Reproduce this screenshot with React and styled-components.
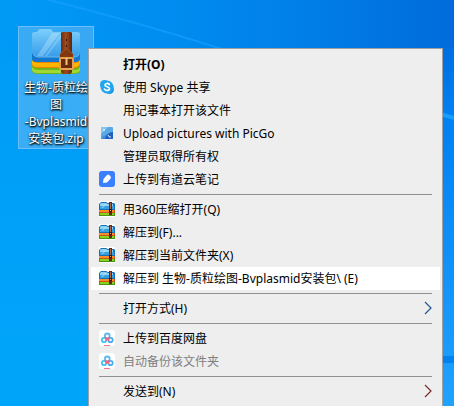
import React from "react";
import styled, { createGlobalStyle, css } from "styled-components";

const GlobalStyle = createGlobalStyle`
  * { box-sizing: border-box; }
  body { margin: 0; }
  button { font: inherit; color: inherit; border: 0; background: none; padding: 0; margin: 0; }
`;

const Desktop = styled.main`
  position: relative;
  height: 100vh;
  overflow: hidden;
  padding: 26px 18px;
  font-family: "Noto Sans", "Noto Sans CJK SC", sans-serif;
  font-size: 12px;
  background: linear-gradient(to bottom, #009af5, #00a6fa);
`;

const Wallpaper = styled.svg`
  position: absolute;
  inset: 0;
  width: 100%;
  height: 100%;
`;

const FileShortcut = styled.button`
  && {
    position: relative;
    display: flex;
    flex-direction: column;
    align-items: center;
    width: 76px;
    padding: 2px 0 1px;
    border: 1px solid #6cbef8;
    background: rgba(120, 190, 245, 0.48);
    color: #fff;
    line-height: 17px;
    text-shadow: 0 1px 2px #000, 1px 1px 2px #000;
  }
`;

const FileName = styled.span`
  width: 72px;
  margin-top: 4px;
  white-space: nowrap;
  text-align: center;
`;

const ContextMenu = styled.ul`
  position: absolute;
  top: 48px;
  left: 88px;
  right: 11px;
  min-height: 100%;
  margin: 0;
  padding: 4px 2px;
  list-style: none;
  border: 1px solid #a0a0a0;
  background: #eeeeee;
  color: #000;
`;

const Item = styled.li`
  display: block;
`;

const MenuButton = styled.button`
  && {
    display: grid;
    grid-template-columns: 16px 1fr 8px;
    column-gap: 8px;
    align-items: start;
    width: 100%;
    padding: 3px 8px;
    line-height: 17px;
    text-align: left;
    white-space: nowrap;
    font-weight: ${(p) => (p.$strong ? 700 : 400)};
    ${(p) => p.$active && css`background: #fff;`}
    &:disabled { color: #808080; }
  }
`;

const IconSlot = styled.span`
  display: flex;
  height: 16px;
`;

const Separator = styled.li`
  height: 1px;
  margin: 3px 8px;
  background: #919191;
`;

const ArchiveLarge = () => (
  <svg width="48" height="46" viewBox="0 0 48 46" aria-hidden="true">
    <defs>
      <linearGradient id="sky" x1="0" y1="0" x2="0" y2="1">
        <stop offset="0" stopColor="#7fd0fb" />
        <stop offset="0.3" stopColor="#62bdf5" />
        <stop offset="1" stopColor="#2b93e6" />
      </linearGradient>
      <linearGradient id="belt" x1="0" y1="0" x2="1" y2="0">
        <stop offset="0" stopColor="#6b2c0e" />
        <stop offset="0.45" stopColor="#a04c1c" />
        <stop offset="1" stopColor="#5c240c" />
      </linearGradient>
    </defs>
    <path d="M0 34h48v7q0 4-5 4H5q-5 0-5-4z" fill="#6fb51c" />
    <path d="M0 38q2 3 6 3h37q4 0 5-3v3q-1 3-5 3H5q-4 0-5-3z" fill="#a0d834" />
    <path d="M0 27h48v8q-1 4-5 4H5q-5 0-5-4z" fill="#e98400" />
    <path d="M0 31q2 3 6 3h37q4 0 5-3v3q-1 4-5 4H5q-5 0-5-4z" fill="#ffb400" />
    <path d="M0 5q0-2 3-2h2q1-3 4-3h9q2 0 3 3h24q3 0 3 2v25q-1 3-5 3H5q-5 0-5-4z" fill="url(#sky)" />
    <path d="M20 4h8L11 27H5zM30 4h2L15 27h-2z" fill="#d9f3ff" opacity=".3" />
    <path d="M0 24q2 4 6 4h37q4 0 5-4v6q-1 3-5 3H5q-5 0-5-3z" fill="#1476cc" />
    <path d="M1 25q2 3 5 3h37q3 0 4-3" fill="none" stroke="#64b9f0" strokeWidth="1" />
    <path d="M29 4q0-1 2-1h7q2 0 2 1v38q0 3-3 3h-5q-3 0-3-3z" fill="url(#belt)" />
    <path d="M28 25l6-5h1l6 5v4H28z" fill="#82380f" />
    <path d="M28 25l6-5h1l6 5" fill="none" stroke="#a35520" />
    <rect x="28" y="29" width="13" height="11" rx="1" fill="#6b2c0e" stroke="#e6a34b" strokeWidth="2" />
    <path d="M34.5 29v7" stroke="#f4c47a" strokeWidth="2" />
    <path d="M34 11h1M34 17h1" stroke="#35100a" strokeWidth="2" />
  </svg>
);

const Archive = () => (
  <svg width="16" height="16" viewBox="0 0 16 16" aria-hidden="true">
    <path d="M0 0h16v16H0z" fill="#fff" />
    <path d="M0 11h16v4H0z" fill="#4d9211" />
    <path d="M1 12h14v2H1z" fill="#8ad41f" />
    <path d="M0 8h16v4H0z" fill="#cc5312" />
    <path d="M0 9h15v2H0z" fill="#f98f26" />
    <path d="M0 3l2-2h5l2 1h6l1 1v6H0z" fill="#176fb5" />
    <path d="M1 3l1-1h5l2 1h5v2H1z" fill="#8dd2f7" />
    <path d="M1 5h14v3H1z" fill="#359fe0" />
    <path d="M6 3h2L4 7H2z" fill="#b9e5fc" opacity=".5" />
    <path d="M10 1h3v13h-3z" fill="#642713" />
    <path d="M11 2h1v7h-1z" fill="#b36238" />
    <path d="M10 8h3v3h-3z" fill="#371511" />
    <path d="M11 9h1v1h-1z" fill="#e9aa62" />
  </svg>
);

const Skype = () => (
  <svg width="16" height="16" viewBox="0 0 16 16" aria-hidden="true">
    <circle cx="5.5" cy="5.5" r="4.5" fill="#24a5ec" />
    <circle cx="10.5" cy="10.5" r="4.5" fill="#159be5" />
    <circle cx="8" cy="8" r="6.5" fill="#22a5ec" />
    <path d="M10.3 5.5C9.5 4.1 6 4 6 6c0 2.1 4.5 1.3 4.5 3.7 0 2.2-4 2.3-5 .4" fill="none" stroke="#fff" strokeWidth="1.7" strokeLinecap="round" />
  </svg>
);

const PicGo = () => (
  <svg width="16" height="16" viewBox="0 0 16 16" aria-hidden="true">
    <rect x="2" y="2" width="12" height="12" rx="1" fill="#5aa9e4" />
    <path d="M2 9l7-7H3q-1 0-1 1z" fill="#86c8f1" />
    <path d="M14 2v5q-4 0-6 3-3 0-6 3l1 1h11z" fill="#3e8fdb" />
    <path d="M6 14q1-6 8-7v6q0 1-1 1z" fill="#1c5fc0" />
    <circle cx="5" cy="5" r="1" fill="#d8f2ff" />
    <path d="M9 10q1 3 3 2" fill="none" stroke="#e6f6ff" />
  </svg>
);

const Youdao = () => (
  <svg width="16" height="16" viewBox="0 0 16 16" aria-hidden="true">
    <rect width="16" height="16" rx="3" fill="#397fff" />
    <path d="M4 12l.5-4L8 4q1.3-1 2.5.3l1 1.2q1 1.1 0 2.3L8 11.5z" fill="#fff" />
  </svg>
);

const Baidu = () => (
  <svg width="16" height="16" viewBox="0 0 16 16" aria-hidden="true">
    <rect width="16" height="16" rx="3" fill="#fff" />
    <g fill="none" strokeWidth="1.8">
      <circle cx="8.3" cy="5.9" r="2.4" stroke="#5fb9ee" />
      <circle cx="5" cy="10" r="2.2" stroke="#3cc8f4" />
      <circle cx="11.5" cy="10" r="2.2" stroke="#45aef2" />
      <path d="M6 7q.5 1.5 2.3 1.5T10.7 7M8.3 8.5l-1.8 2.2M8.3 8.5l1.8 2.2" stroke="#f2637f" strokeWidth="1.5" />
    </g>
    <path d="M5 15.5h6" stroke="#f2798c" />
  </svg>
);

const Chevron = ({ color }) => (
  <svg width="8" height="16" viewBox="0 0 8 16" aria-hidden="true">
    <path d="M1 2l6 6-6 6" fill="none" stroke={color} strokeWidth="1.2" />
  </svg>
);

const groups = [
  [
    { label: "打开(O)", strong: true },
    { label: "使用 Skype 共享", icon: Skype },
    { label: "用记事本打开该文件" },
    { label: "Upload pictures with PicGo", icon: PicGo },
    { label: "管理员取得所有权" },
    { label: "上传到有道云笔记", icon: Youdao },
  ],
  [
    { label: "用360压缩打开(Q)", icon: Archive },
    { label: "解压到(F)...", icon: Archive },
    { label: "解压到当前文件夹(X)", icon: Archive },
    { label: "解压到 生物-质粒绘图-Bvplasmid安装包\\ (E)", icon: Archive, active: true },
  ],
  [{ label: "打开方式(H)", arrow: "#23558a" }],
  [
    { label: "上传到百度网盘", icon: Baidu },
    { label: "自动备份该文件夹", icon: Baidu, disabled: true },
  ],
  [{ label: "发送到(N)", arrow: "#7c2a2a" }],
];

function Entry({ label, icon: Icon, arrow, strong, active, disabled }) {
  return (
    <Item>
      <MenuButton type="button" $strong={strong} $active={active} disabled={disabled}>
        <IconSlot>{Icon && <Icon />}</IconSlot>
        <span>{label}</span>
        {arrow && <Chevron color={arrow} />}
      </MenuButton>
    </Item>
  );
}

export default function App() {
  return (
    <>
      <GlobalStyle />
      <Desktop lang="zh-CN">
        <Wallpaper viewBox="0 0 454 406" preserveAspectRatio="none" aria-hidden="true">
          <defs>
            <linearGradient id="night" x1="0" y1="0" x2="1" y2="0">
              <stop offset="0" stopColor="#0090f0" stopOpacity="0" />
              <stop offset="0.35" stopColor="#008df0" />
              <stop offset="0.65" stopColor="#0080e8" />
              <stop offset="1" stopColor="#006bdc" />
            </linearGradient>
            <linearGradient id="glow" x1="0" y1="0" x2="0" y2="1">
              <stop offset="0" stopColor="#006fe2" />
              <stop offset="0.18" stopColor="#0080f2" />
              <stop offset="1" stopColor="#20a2ff" />
            </linearGradient>
          </defs>
          <path d="M0 0h454v60H0z" fill="url(#night)" />
          <path d="M440 48h14v358h-14z" fill="url(#glow)" />
          <path d="M45 -1Q130 20 222 49" fill="none" stroke="#1ea6ff" strokeWidth="2" opacity=".5" />
          <path d="M440 112l14 4v4l-14-4z" fill="#16a1ff" />
          <path d="M440 356h14v7h-14z" fill="#0082ef" />
        </Wallpaper>
        <FileShortcut type="button">
          <ArchiveLarge />
          <FileName>生物-质粒绘<br />图<br />-Bvplasmid<br />安装包.zip</FileName>
        </FileShortcut>
        <ContextMenu>
          {groups.map((group, index) => (
            <React.Fragment key={group[0].label}>
              {index > 0 && <Separator role="separator" />}
              {group.map((entry) => <Entry key={entry.label} {...entry} />)}
            </React.Fragment>
          ))}
        </ContextMenu>
      </Desktop>
    </>
  );
}
